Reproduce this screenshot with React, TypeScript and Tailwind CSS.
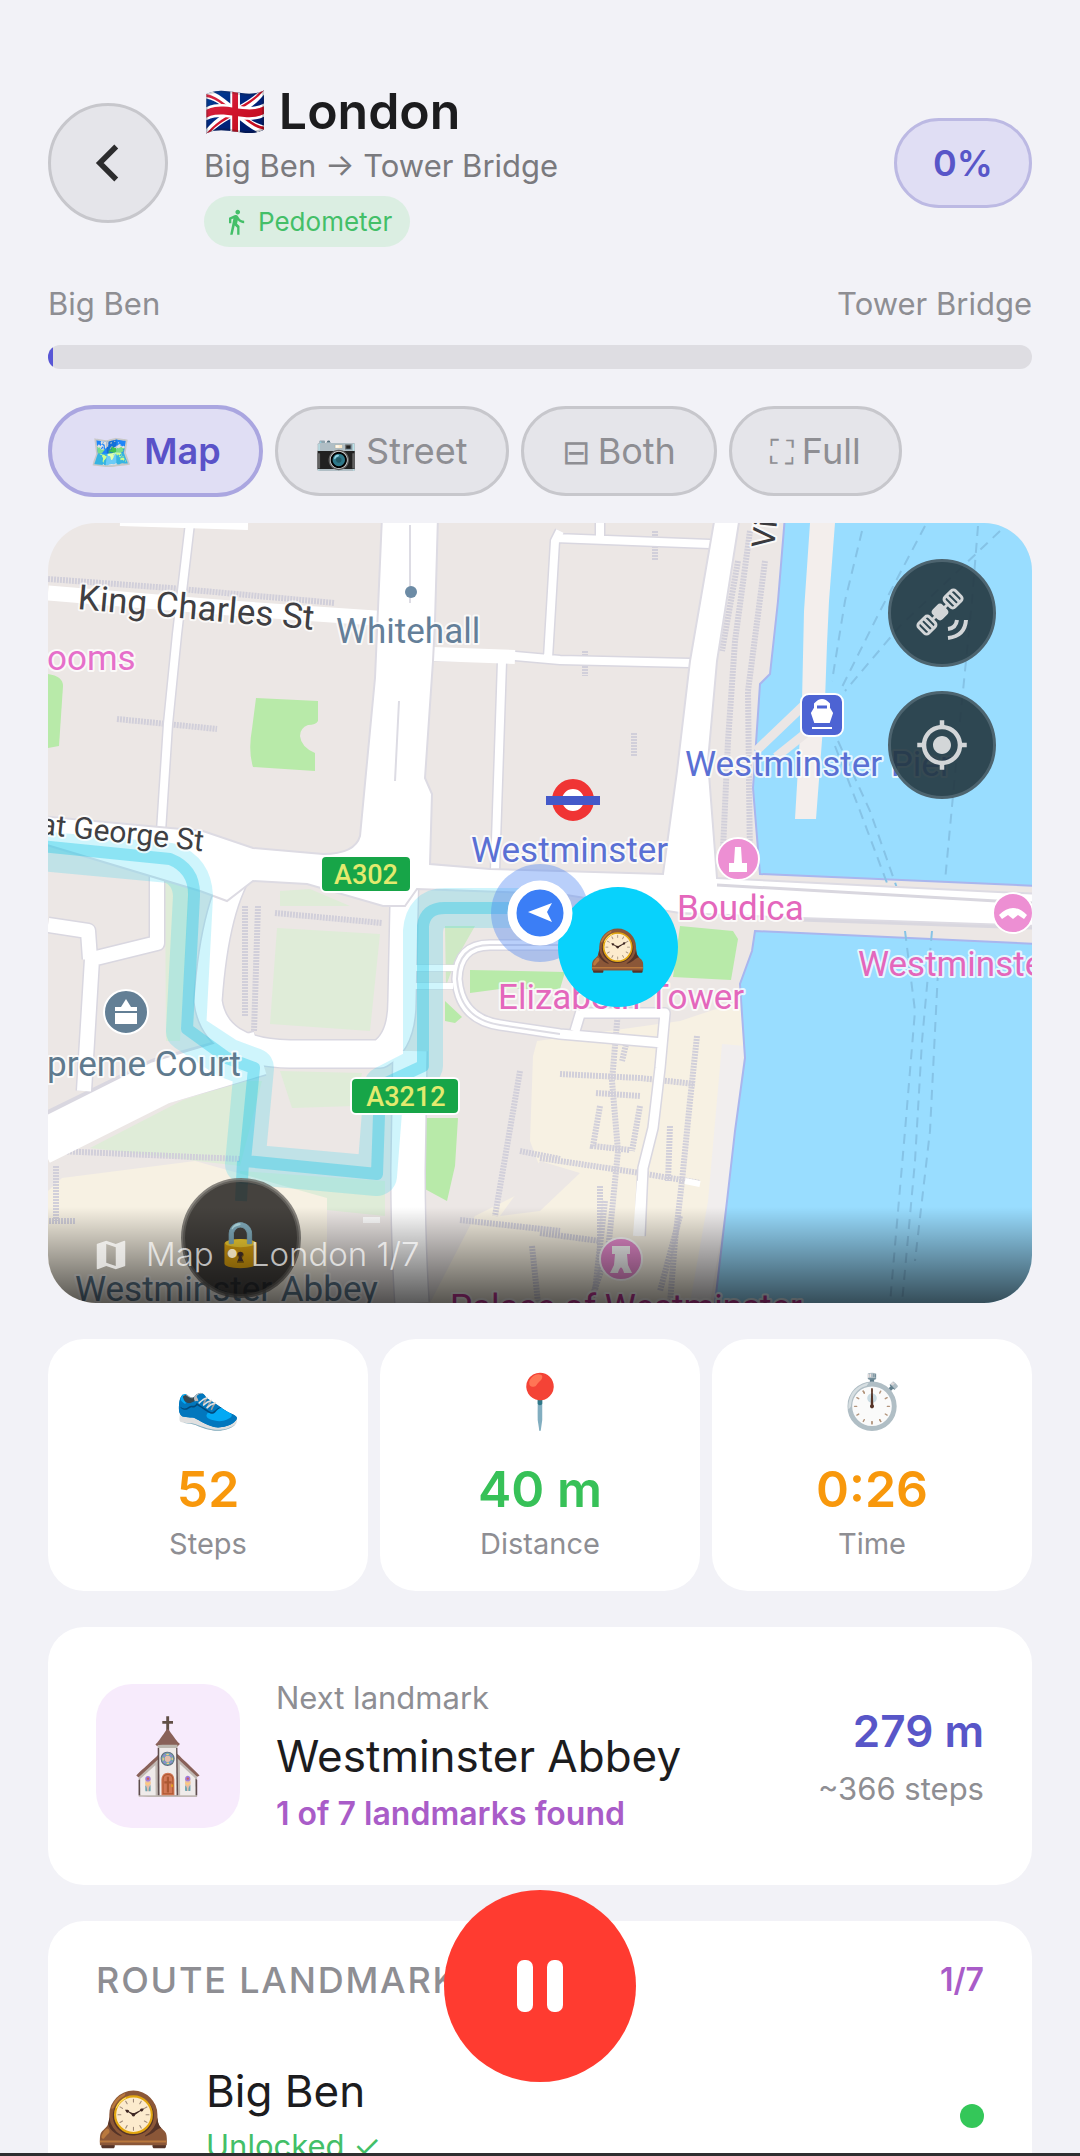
import { ChevronLeft } from 'lucide-react'
import { MdDirectionsWalk, MdMap, MdMyLocation } from 'react-icons/md'

const tabs = [
  { icon: '🗺️', label: 'Map', active: true },
  { icon: '📷', label: 'Street', active: false },
  { icon: '⊟', label: 'Both', active: false },
  { icon: '⛶', label: 'Full', active: false }
]

const stats = [
  { icon: '👟', value: '52', label: 'Steps', color: 'text-[#f8980c]' },
  { icon: '📍', value: '40 m', label: 'Distance', color: 'text-[#37c158]' },
  { icon: '⏱️', value: '0:26', label: 'Time', color: 'text-[#f8980c]' }
]

function SatelliteIcon() {
  return (
    <svg viewBox="0 0 54 54" className="size-[54px]" fill="none" stroke="currentColor" strokeWidth="3">
      <g transform="rotate(-45 25 26)">
        <rect x="-1" y="19" width="15" height="14" rx="3" />
        <path d="M4 19V33M9 19V33M14 26H36" />
        <rect x="36" y="19" width="15" height="14" rx="3" />
        <path d="M41 19V33M46 19V33" />
        <rect x="18" y="19" width="14" height="14" rx="4" fill="currentColor" stroke="none" />
      </g>
      <path d="M42 34Q41 42 33 43" strokeWidth="4" />
      <path d="M51 34Q50 50 33 52" strokeWidth="4" />
    </svg>
  )
}

function PauseIcon() {
  return (
    <svg viewBox="0 0 46 52" className="h-[52px]" fill="currentColor">
      <rect width="16" height="52" rx="7" />
      <rect x="30" width="16" height="52" rx="7" />
    </svg>
  )
}

function Header() {
  return (
    <header className="flex items-center">
      <button
        aria-label="Back"
        className="flex size-30 shrink-0 items-center justify-center rounded-full border-3 border-[#c7c7cc] bg-[#e5e5ea] text-[#2c2c2e]"
      >
        <ChevronLeft size={66} strokeWidth={2} strokeLinecap="butt" strokeLinejoin="miter" />
      </button>
      <div className="ml-9 flex-1">
        <h1 className="text-[50px] leading-[66px] font-semibold text-[#1c1c1e]">🇬🇧 London</h1>
        <p className="text-[31px] leading-[44px] text-[#7a7a7e]">Big Ben → Tower Bridge</p>
        <div className="mt-2 inline-flex h-[51px] items-center gap-2 rounded-full bg-[#dbeee2] px-[18px] text-[#43bf68]">
          <MdDirectionsWalk size={28} />
          <span className="text-[26px]">Pedometer</span>
        </div>
      </div>
      <div className="flex h-[90px] items-center rounded-full border-3 border-[#bcb9e3] bg-[#e0def4] px-9 text-[36px] font-semibold text-[#5856c8]">
        0%
      </div>
    </header>
  )
}

function Progress() {
  return (
    <section className="mt-9">
      <div className="flex justify-between text-[31px] leading-[42px] text-[#8e8e93]">
        <span>Big Ben</span>
        <span>Tower Bridge</span>
      </div>
      <div className="mt-5 h-6 overflow-hidden rounded-full bg-[#dedde2]">
        <div className="h-full w-[5px] bg-[#5856d6]" />
      </div>
    </section>
  )
}

function ViewTabs() {
  return (
    <nav className="mt-9 flex items-center gap-3">
      {tabs.map((tab) => (
        <button
          key={tab.label}
          className={
            tab.active
              ? 'flex h-[92px] items-center gap-3 rounded-full border-4 border-[#aaa6e0] bg-[#e0def4] px-[38px] text-[36px] font-semibold text-[#5a52c8]'
              : 'flex h-[90px] items-center gap-2 rounded-full border-3 border-[#c7c7cc] bg-[#e5e5ea] px-[38px] text-[36px] text-[#8e8e93]'
          }
        >
          <span className="text-[34px] font-normal">{tab.icon}</span>
          {tab.label}
        </button>
      ))}
    </nav>
  )
}

function MapDrawing() {
  return (
    <svg
      viewBox="48 522 984 780"
      preserveAspectRatio="xMidYMid slice"
      className="block size-full"
      fontFamily="Roboto, 'Liberation Sans', sans-serif"
      fontWeight="500"
    >
      <rect x="48" y="522" width="984" height="780" fill="#ece7e5" />

      {/* parks and courtyards */}
      <g fill="#dfecd8">
        <path d="M277 927L380 933 370 1030 270 1023z" />
        <path d="M90 1147L183 1099 243 1080 262 1080 240 1165z" />
        <path d="M280 1070L362 1072 355 1105 292 1107z" />
        <path d="M165 880L190 880 180 1040 166 1040z" />
        <path d="M240 1170L385 1180 385 1215 240 1200z" />
        <path d="M280 890L310 888 350 905 280 905z" />
      </g>
      <g fill="#f7f1e3">
        <path d="M62 1177L195 1160 327 1197 327 1302H48V1190z" />
        <path d="M537 1040L680 1020 740 1000 745 1050 710 1200 700 1302H430L475 1215 545 1180 530 1140 533 1055z" />
      </g>
      <path d="M540 1160L580 1172 540 1210 500 1215z" fill="#ece7e5" />
      <path d="M722 1043L745 1045 727 1200 710 1302H690L708 1200z" fill="#f1eeee" />
      <g fill="#b8eaa9">
        <path d="M256 697L318 700V720Q316 724 308 724Q300 727 300 735Q301 746 315 752V770L253 766Q248 750 252 728z" />
        <path d="M48 673Q63 675 63 685L59 745 48 747z" />
        <path d="M680 925L733 930 738 938 731 979 673 976z" />
        <path d="M470 969L565 971 560 988H500L470 992z" />
        <path d="M445 1000L462 1016 455 1022 445 1020z" />
        <path d="M425 1117H458L455 1165 447 1200 423 1187z" />
      </g>
      <path d="M445 925L475 925 455 960 446 985z" fill="#cfe9c5" />

      {/* river */}
      <g fill="#99ddff" stroke="#a9b6ee" strokeWidth="2">
        <path d="M785 515H1040V885L760 873 753 787 760 683 770 673 778 600z" />
        <path d="M755 930L1040 943V1310H714L727 1200 735 1130 745 1057 740 983 752 950z" />
      </g>
      <path d="M810 522H835L829 600 827 643 825 700 816 818H795L802 700 804 610z" fill="#f3eeec" />
      <path d="M756 750L803 705M776 756L806 732" stroke="#ebe6e5" strokeWidth="9" />
      <g fill="none" stroke="#86c3e6" strokeWidth="2" strokeDasharray="10 7">
        <path d="M862 530L845 600 832 680M925 525L880 610 840 690M978 525L972 600 960 720 945 880M1000 530L900 625 845 690" />
        <path d="M835 745L860 810 890 890M838 740L870 810 898 890" />
        <path d="M905 930L915 1010 905 1130 890 1302M932 930L922 1040 915 1160 902 1302M938 970L930 1130 915 1260" />
      </g>

      {/* dotted building and path edges */}
      <g fill="none" stroke="#d1cfda" strokeWidth="6" strokeDasharray="2 1">
        <path d="M48 578L170 587 335 602M117 718L217 728M58 1150L240 1158M56 1165V1220M40 1220H76M245 905V1015M258 905L254 1030M275 912L382 922" />
        <path d="M750 530L735 640 728 740 722 870M765 560L748 690 750 860M738 560L722 650" />
        <path d="M655 530V560M585 650V675M634 732V755M618 1010L612 1080 618 1150 608 1250 590 1302M628 1035L622 1060M697 1035L690 1100 682 1180 675 1240 670 1302" />
        <path d="M560 1073L640 1077 695 1083M596 1092L640 1095M600 1105L593 1145 630 1149M640 1105L632 1150M540 1157L640 1172 700 1182M540 1232L600 1240M670 1125L668 1180M520 1070L495 1215M460 1219L560 1230M532 1245L538 1302M520 1150L560 1158M600 1185V1260" />
        <path d="M605 1200L595 1290M680 1215L660 1290" />
      </g>

      {/* streets, casing first and surface on top */}
      <g fill="none" strokeLinejoin="round">
        <g stroke="#d9d7e0">
          <path d="M190 522L177 633 168 723 163 800 158 877" strokeWidth="11" />
          <path d="M157 860V942L92 958 84 1090M48 924L88 930 90 958" strokeWidth="17" />
          <path d="M433 655L515 655 560 659 690 662M502 660L495 870M560 530L555 540 548 657M555 537L710 543M600 522V537" strokeWidth="11" />
          <path d="M48 1135L160 1080 260 1052" strokeWidth="47" />
          <path d="M245 860Q215 900 208 1000Q215 1052 290 1053L380 1053Q402 1040 402 1000L405 860" strokeWidth="30" />
          <path d="M410 1050L408 1170Q408 1240 412 1302" strokeWidth="36" />
          <path d="M565 944H490Q458 944 457 978Q460 1018 500 1024L560 1033 663 1042M580 1012H665L660 1067 653 1127 643 1167 640 1235M575 1030L581 1010" strokeWidth="12" />
          <path d="M413 967H455M413 985H453" strokeWidth="7" />
        </g>
        <g stroke="#ffffff">
          <path d="M120 520L248 524" strokeWidth="10" />
          <path d="M190 522L177 633 168 723 163 800 158 877" strokeWidth="8" />
          <path d="M157 860V942L92 958 84 1090M48 924L88 930 90 958" strokeWidth="14" />
          <path d="M48 592L230 607 390 618" strokeWidth="15" />
          <path d="M433 655L515 655 560 659 690 662M502 660L495 870M560 530L555 540 548 657M555 537L710 543M600 522V537" strokeWidth="8" />
          <path d="M433 653L515 656" strokeWidth="14" />
          <path d="M40 1142L160 1082 260 1052" strokeWidth="44" />
          <path d="M245 860Q215 900 208 1000Q215 1052 290 1053L380 1053Q402 1040 402 1000L405 860" strokeWidth="27" />
          <path d="M410 1050L408 1170Q408 1240 412 1302" strokeWidth="33" />
          <path d="M565 944H490Q458 944 457 978Q460 1018 500 1024L560 1033 663 1042M580 1012H665L660 1067 653 1127 643 1167 640 1235M575 1030L581 1010" strokeWidth="9" />
          <path d="M413 967H455M413 985H453M640 1180L636 1235M685 1180L700 1183M363 1219H380" strokeWidth="6" />
        </g>
        <path d="M565 944H490Q458 944 457 978Q460 1018 500 1024L560 1033" stroke="#dddce4" strokeWidth="2" />
      </g>
      <g fill="#ffffff" stroke="#dddbe3" strokeWidth="2">
        <path d="M382 515H438L435 620 433 660 425 777 432 793 430 863 490 868 663 873 677 770 690 660 715 515H740L717 660 708 760 717 877 1040 893V925L800 917 680 912 560 893 417 888 405 905H383L307 883 253 880 227 900 200 890 40 842V815L203 830 253 847 323 853Q355 853 360 835L375 677z" />
      </g>
      <path d="M410 524V602M399 700L395 780" stroke="#dddce4" strokeWidth="2" />
      <path d="M717 884L1032 902M800 919L1032 927" stroke="#d9d7df" strokeWidth="3" />

      {/* walking route */}
      <g fill="none" strokeLinejoin="round">
        <g stroke="#23d3f3" strokeOpacity="0.22" strokeWidth="40">
          <path d="M40 850L170 862Q192 870 193 895L186 1030 227 1057 254 1067 245 1163 377 1175 384 1085 423 1065V930Q425 907 445 907H540" />
        </g>
        <g stroke="#20c8e8" strokeOpacity="0.38" strokeWidth="12">
          <path d="M40 845L170 858Q195 868 194 895L187 1028 227 1057 254 1067 245 1160 377 1173 380 1085 423 1065V925Q425 907 445 907H540M243 1160L241 1200" />
        </g>
      </g>

      {/* road shields */}
      <g stroke="#ffffff" strokeWidth="2">
        <rect x="321" y="855" width="90" height="36" rx="5" fill="#17a548" />
        <rect x="351" y="1077" width="108" height="36" rx="5" fill="#17a548" />
      </g>
      <g fill="#e3ea6e" fontSize="27" textAnchor="middle">
        <text x="366" y="883">A302</text>
        <text x="406" y="1105">A3212</text>
      </g>

      {/* labels */}
      <g fontSize="35" fontWeight="400" stroke="#ffffff" strokeWidth="4" strokeOpacity="0.75" paintOrder="stroke" strokeLinejoin="round">
        <text x="77" y="608" fill="#3f3f43" transform="rotate(5 77 608)">King Charles St</text>
        <text x="39" y="833" fontSize="30" fill="#3f3f43" transform="rotate(6 39 833)">at George St</text>
        <text x="774" y="548" fontSize="32" fill="#3a3a3e" transform="rotate(-84 774 548)">Victoria</text>
        <text x="336" y="642" fill="#647f99">Whitehall</text>
        <text x="47" y="669" fill="#e66fca">ooms</text>
        <text x="47" y="1075" fill="#5f7a8e">preme Court</text>
        <text x="471" y="861" fill="#5a70d4">Westminster</text>
        <text x="685" y="775" fill="#5a70d4">Westminster Pier</text>
        <text x="677" y="919" fill="#e467bc">Boudica</text>
        <text x="498" y="1008" fill="#e467bc">Elizabeth Tower</text>
        <text x="858" y="975" fill="#e467bc">Westminster Bridge</text>
        <text x="75" y="1300" fill="#5f7a8e">Westminster Abbey</text>
        <text x="450" y="1318" fill="#c5389a">Palace of Westminster</text>
      </g>
      <circle cx="411" cy="591" r="6" fill="#6c8ba5" />

      {/* underground roundel */}
      <circle cx="573" cy="799" r="16" fill="#ffffff" stroke="#f03434" strokeWidth="10" />
      <rect x="546" y="795" width="54" height="9" fill="#4459c9" />

      {/* pier */}
      <rect x="801" y="693" width="42" height="42" rx="8" fill="#4d63d3" stroke="#ffffff" strokeWidth="2" />
      <path d="M812 712L815 707V703Q822 695 829 703V707L832 712 829 721H815zM812 727H832" fill="#ffffff" stroke="#ffffff" strokeWidth="2" />
      <path d="M817 706H827" stroke="#4d63d3" strokeWidth="3" />

      {/* place pins */}
      <g fill="#ed8fd3" stroke="#ffffff" strokeWidth="2">
        <circle cx="738" cy="858" r="21" />
        <circle cx="1013" cy="912" r="20" />
        <circle cx="621" cy="1258" r="21" />
      </g>
      <g fill="#ffffff">
        <path d="M735 846H741L742 862H747V871H729V862H734z" />
        <path d="M999 914Q1013 900 1027 914L1024 918 1018 914 1013 918 1008 914 1002 918z" />
        <path d="M612 1245H630V1253H627L628 1264 632 1272H624Q621 1261 618 1272H610L614 1264 615 1253H612z" />
      </g>
      <circle cx="126" cy="1011" r="22" fill="#637f95" stroke="#ffffff" strokeWidth="2" />
      <path d="M115 1006H121L126 998 131 1006H137V1010H115zM115 1012H137V1023H115z" fill="#ffffff" />

      {/* locked landmark */}
      <circle cx="241" cy="1237" r="58" fill="#1d1b1a" fillOpacity="0.82" stroke="#6b6964" strokeOpacity="0.8" strokeWidth="4" />
      <text x="241" y="1258" fontSize="44" textAnchor="middle" fontFamily="'Noto Color Emoji', sans-serif">🔒</text>

      {/* current position and reached landmark */}
      <circle cx="540" cy="912" r="49" fill="#4f86f2" fillOpacity="0.4" />
      <circle cx="618" cy="946" r="60" fill="#08d2fc" />
      <text x="618" y="964" fontSize="46" textAnchor="middle" fontFamily="'Noto Color Emoji', sans-serif">🕰️</text>
      <circle cx="540" cy="912" r="28" fill="#3b7ef6" stroke="#ffffff" strokeWidth="9" />
      <path d="M528 911L552 902 547 911 552 921z" fill="#ffffff" />
    </svg>
  )
}

function MapPanel() {
  return (
    <section className="relative mt-[26px] aspect-[984/780] overflow-hidden rounded-[48px]">
      <MapDrawing />
      <div className="absolute inset-x-0 bottom-0 flex h-24 items-center gap-4 bg-linear-to-b from-transparent to-black/65 pl-11 text-white/70">
        <MdMap size={38} />
        <span className="text-[33px] font-light">Map • London 1/7</span>
      </div>
      <div className="absolute top-9 right-9 flex flex-col gap-6">
        <button
          aria-label="Satellite view"
          className="flex size-27 items-center justify-center rounded-full border-3 border-[#4d646f] bg-[#22363f]/90 text-[#d3d6d8]"
        >
          <SatelliteIcon />
        </button>
        <button
          aria-label="Center on my location"
          className="flex size-27 items-center justify-center rounded-full border-3 border-[#4d646f] bg-[#22363f]/90 text-[#d3d6d8]"
        >
          <MdMyLocation size={54} />
        </button>
      </div>
    </section>
  )
}

function Stats() {
  return (
    <section className="mt-9 grid grid-cols-3 gap-3">
      {stats.map((stat) => (
        <div key={stat.label} className="flex flex-col items-center rounded-[36px] bg-white pt-8 pb-[26px]">
          <span className="text-[53px] leading-[60px]">{stat.icon}</span>
          <span className={`mt-7 text-[50px] leading-[60px] font-semibold ${stat.color}`}>{stat.value}</span>
          <span className="mt-1 text-[29px] leading-[42px] text-[#8e8e93]">{stat.label}</span>
        </div>
      ))}
    </section>
  )
}

function NextLandmark() {
  return (
    <section className="mt-9 flex items-center rounded-[36px] bg-white px-12 py-[50px]">
      <div className="flex size-36 items-center justify-center rounded-[36px] bg-[#f7ebfc] text-[72px]">⛪</div>
      <div className="ml-9 flex flex-1 flex-col gap-2">
        <span className="text-[31px] leading-[42px] text-[#8e8e93]">Next landmark</span>
        <span className="text-[44px] leading-[58px] text-[#1c1c1e]">Westminster Abbey</span>
        <span className="text-[32px] leading-[42px] font-semibold text-[#a95cc8]">1 of 7 landmarks found</span>
      </div>
      <div className="flex flex-col items-end gap-2">
        <span className="text-[44px] leading-[58px] font-semibold text-[#5856c8]">279 m</span>
        <span className="text-[31px] leading-[42px] text-[#8e8e93]">~366 steps</span>
      </div>
    </section>
  )
}

function RouteLandmarks() {
  return (
    <section className="mt-9 rounded-[36px] bg-white px-12 pt-[38px] pb-12">
      <div className="flex justify-between leading-[42px]">
        <h2 className="text-[36px] font-medium tracking-wider text-[#8e8e93]">ROUTE LANDMARKS</h2>
        <span className="text-[32px] font-semibold text-[#a95cc8]">1/7</span>
      </div>
      <div className="mt-15 flex items-center">
        <span className="w-[74px] text-[60px] leading-[108px]">🕰️</span>
        <div className="ml-9 flex flex-1 flex-col">
          <span className="text-[44px] leading-[60px] text-[#1c1c1e]">Big Ben</span>
          <span className="text-[31px] leading-[50px] text-[#43bf68]">Unlocked ✓</span>
        </div>
        <span className="size-6 rounded-full bg-[#34c759]" />
      </div>
    </section>
  )
}

export default function App() {
  return (
    <div className="h-screen overflow-hidden bg-[#f2f2f7] px-12 pt-[78px] font-['Inter','Noto_Color_Emoji',sans-serif]">
      <Header />
      <Progress />
      <ViewTabs />
      <MapPanel />
      <Stats />
      <NextLandmark />
      <RouteLandmarks />
      <button
        aria-label="Pause"
        className="fixed bottom-[74px] left-1/2 flex size-48 -translate-x-1/2 items-center justify-center rounded-full bg-[#ff3b30] text-white"
      >
        <PauseIcon />
      </button>
      <div className="fixed inset-x-0 bottom-0 h-[3px] bg-[#2e2e30]" />
    </div>
  )
}
